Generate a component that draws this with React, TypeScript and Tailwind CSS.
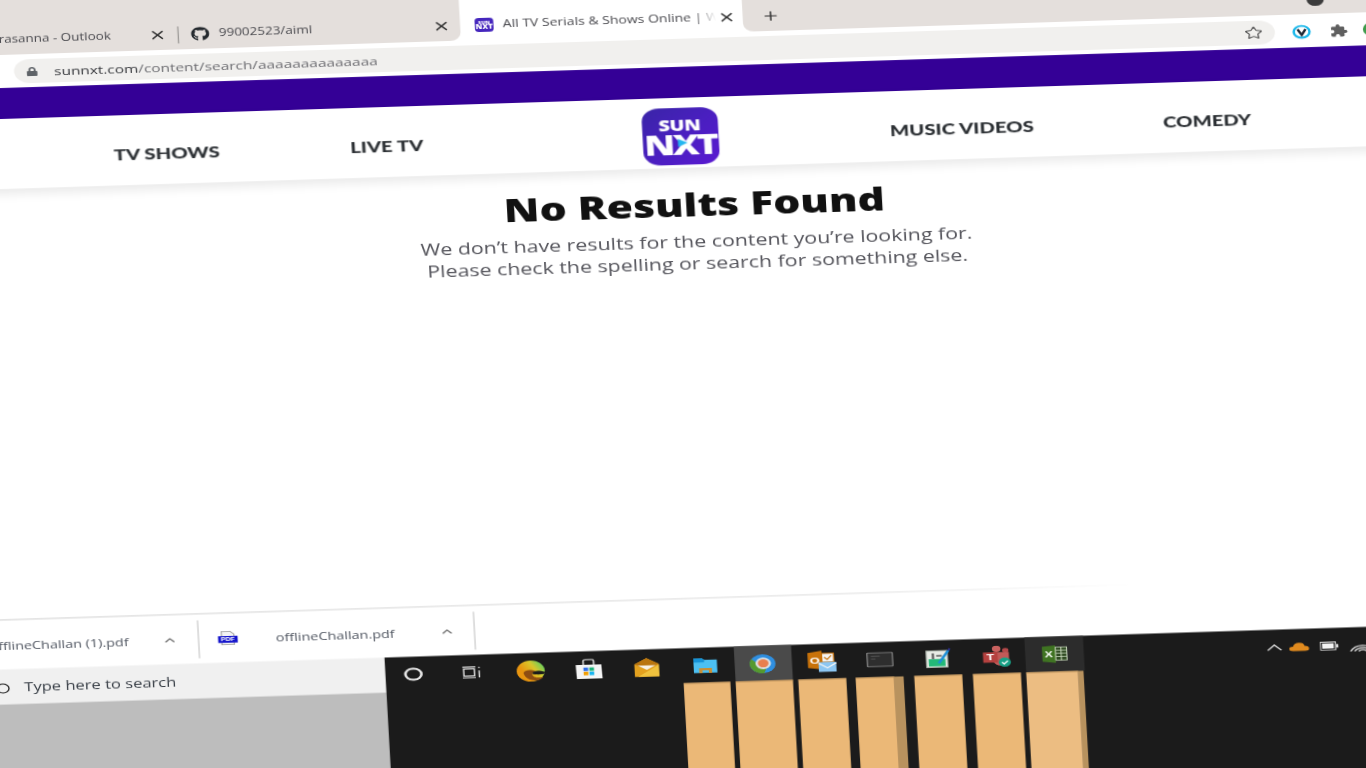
import { ChevronUp, Plus, Star, X } from "lucide-react";
import { FaGithub, FaLock } from "react-icons/fa";

function SunNxtLogo() {
	return (
		<div className="relative flex h-[57px] w-[57px] flex-col items-center justify-center rounded-[13px] bg-gradient-to-br from-[#3a24a8] via-[#4a1fc0] to-[#5a18d2] pt-[3px] font-['Open_Sans',sans-serif] text-white">
			<span className="text-[15px] leading-[13px] font-extrabold tracking-tight">SUN</span>
			<span className="text-[28px] leading-[24px] font-extrabold tracking-[-2px]">NXT</span>
			<svg viewBox="0 0 10 10" className="absolute top-[31px] left-[25px] h-[8px] w-[9px]">
				<path d="M1 0 L10 5 L1 10 Z" fill="#23b5f0" />
			</svg>
		</div>
	);
}

function Favicon() {
	return (
		<div className="flex h-[14px] w-[14px] shrink-0 flex-col items-center justify-center rounded-[3px] bg-[#4526bd] text-white">
			<span className="text-[4px] leading-[4px] font-extrabold">SUN</span>
			<span className="text-[6px] leading-[5px] font-extrabold">NXT</span>
		</div>
	);
}

function PdfIcon() {
	return (
		<svg viewBox="0 0 16 16" className="h-[15px] w-[15px] shrink-0">
			<path d="M3 1 H10 L13 4 V15 H3 Z" fill="#f4f4f4" stroke="#9a9a9a" strokeWidth="0.8" />
			<rect x="0" y="6" width="16" height="7" fill="#1414cc" />
			<text x="8" y="11.6" textAnchor="middle" fontSize="5.6" fontWeight="700" fill="#fff" fontFamily="Liberation Sans, sans-serif">PDF</text>
		</svg>
	);
}

function VimeoIcon() {
	return (
		<svg viewBox="0 0 16 16" className="h-[15px] w-[14px] shrink-0">
			<circle cx="8" cy="8" r="6.8" fill="#fff" stroke="#1ab7ea" strokeWidth="2.2" />
			<path d="M4.6 5 L8 11.6 L11.4 5" fill="none" stroke="#1d2733" strokeWidth="2.2" />
		</svg>
	);
}

function PuzzleIcon() {
	return (
		<svg viewBox="0 0 24 24" className="ml-[14px] h-[17px] w-[14px] shrink-0" fill="#5f5f5f">
			<path d="M20.5 11H19V7c0-1.1-.9-2-2-2h-4V3.5C13 2.12 11.88 1 10.5 1S8 2.12 8 3.5V5H4c-1.1 0-1.99.9-1.99 2v3.8H3.5c1.49 0 2.7 1.21 2.7 2.7s-1.21 2.7-2.7 2.7H2V20c0 1.1.9 2 2 2h3.8v-1.5c0-1.49 1.21-2.7 2.7-2.7 1.49 0 2.7 1.21 2.7 2.7V22H17c1.1 0 2-.9 2-2v-4h1.5c1.38 0 2.5-1.12 2.5-2.5S21.88 11 20.5 11z" />
		</svg>
	);
}

function EdgeIcon() {
	return (
		<svg viewBox="0 0 24 24" className="h-[22px] w-[22px]">
			<defs>
				<linearGradient id="edgeGrad" x1="0" y1="0.8" x2="1" y2="0.2">
					<stop offset="0.3" stopColor="#e8950f" />
					<stop offset="0.65" stopColor="#d9c62a" />
					<stop offset="1" stopColor="#55d065" />
				</linearGradient>
			</defs>
			<circle cx="12" cy="12" r="11.5" fill="url(#edgeGrad)" />
			<path d="M6 14 C7 20 12 23.5 18 22 C20 21 21 20.5 22 19 C17 20.5 13 18.5 13 15.5 C13 14 14 13 16 12.5 C12 10 7 10.5 6 14 Z" fill="#8e4d12" />
			<path d="M13 15 C13.5 12 18 11 23.5 13.5 L23 15.5 C20 16 16 16.5 13 15 Z" fill="#1b1b1b" />
		</svg>
	);
}

function StoreIcon() {
	return (
		<svg viewBox="0 0 24 24" className="h-[22px] w-[21px]">
			<path d="M7.5 7 V3 Q7.5 1 9.5 1 H14.5 Q16.5 1 16.5 3 V7" fill="none" stroke="#bdbdbd" strokeWidth="1.6" />
			<path d="M1 7 H23 L23.5 23 H1.5 Z" fill="#f5f5f5" />
			<rect x="7.5" y="10" width="4" height="4" fill="#2f6fe8" />
			<rect x="12.5" y="10" width="4" height="4" fill="#18b37a" />
			<rect x="7.5" y="15" width="4" height="4" fill="#f29f05" />
			<rect x="12.5" y="15" width="4" height="4" fill="#19b5f0" />
		</svg>
	);
}

function MailIcon() {
	return (
		<svg viewBox="0 0 24 24" className="h-[20px] w-[22px]">
			<path d="M1 8 L12 1 L23 8 V23 H1 Z" fill="#e3a11f" />
			<path d="M1 8 L12 1 L23 8 L12 14 Z" fill="#b9750f" />
			<path d="M4 9.5 H20 L12 15 Z" fill="#f7f2e6" />
			<path d="M23 9 V23 H4 Z" fill="#f0c23e" />
		</svg>
	);
}

function FolderIcon() {
	return (
		<svg viewBox="0 0 24 20" className="h-[16px] w-[20px]">
			<path d="M1 1 H9 L11 3 H23 V19 H1 Z" fill="#4cc0f2" />
			<path d="M1 1 H9 L11 3 V6 H1 Z" fill="#1593d8" />
			<path d="M6 19.5 V13 H18 V19.5 H15 V16 H9 V19.5 Z" fill="#c98f35" />
		</svg>
	);
}

function ChromeIcon() {
	return (
		<svg viewBox="0 0 24 24" className="h-[20px] w-[20px]">
			<circle cx="12" cy="12" r="11.5" fill="#2f8fe0" />
			<path d="M2 6 A11.5 11.5 0 0 0 13 23.4 L15 18 L7 11 Z" fill="#55992f" />
			<circle cx="12.5" cy="11.5" r="7" fill="#dcdfe2" />
			<circle cx="12.5" cy="11.5" r="4.8" fill="#ea7f4e" />
		</svg>
	);
}

function OutlookIcon() {
	return (
		<svg viewBox="0 0 26 26" className="h-[23px] w-[23px]">
			<path d="M1 3 L13 1 V22 L1 20 Z" fill="#c8720a" />
			<rect x="13" y="4" width="10" height="10" fill="#f5f5f5" stroke="#c8720a" strokeWidth="1" />
			<path d="M15 8.5 L17.5 11 L21 6.5" fill="none" stroke="#c8720a" strokeWidth="1.2" />
			<text x="7" y="15" textAnchor="middle" fontSize="11" fontWeight="700" fill="#fff" fontFamily="Liberation Sans, sans-serif">O</text>
			<rect x="10" y="14" width="15" height="11" fill="#8cc6f2" />
			<path d="M10 15 L17.5 20.5 L25 15" fill="none" stroke="#f5f5f5" strokeWidth="1.3" />
		</svg>
	);
}

function ConsoleIcon() {
	return (
		<svg viewBox="0 0 24 18" className="h-[15px] w-[20px]">
			<rect x="0.5" y="0.5" width="23" height="17" rx="1" fill="#2e2e2e" stroke="#8c8c8c" strokeWidth="1.2" />
			<path d="M4 5 H12 M4 8 H8" stroke="#5c5c5c" strokeWidth="1" />
		</svg>
	);
}

function EditorIcon() {
	return (
		<svg viewBox="0 0 24 24" className="h-[22px] w-[20px]">
			<path d="M1 3 H20 V23 H1 Z" fill="#e9ece6" stroke="#aeb6ac" strokeWidth="1" />
			<rect x="3" y="13" width="15" height="8.5" fill="#23b878" />
			<path d="M7 6 V13 M10 9 H15" stroke="#5a5a5a" strokeWidth="2" />
			<path d="M12 18 L21 3" stroke="#1c8ed6" strokeWidth="2.6" />
			<path d="M21 3 L22.4 0.6" stroke="#2b2f8a" strokeWidth="2" />
		</svg>
	);
}

function TeamsIcon() {
	return (
		<svg viewBox="0 0 26 26" className="h-[22px] w-[23px]">
			<circle cx="13" cy="4" r="3.8" fill="#c9625f" />
			<circle cx="21" cy="6" r="2.8" fill="#b5494a" />
			<path d="M10 8 H24 V18 Q24 24 17 24 Q11 24 10 18 Z" fill="#c15a58" />
			<rect x="1" y="8" width="13" height="12" fill="#b5413f" />
			<text x="7.5" y="17.5" textAnchor="middle" fontSize="11" fontWeight="700" fill="#fff" fontFamily="Liberation Sans, sans-serif">T</text>
			<circle cx="20" cy="20" r="5.4" fill="#17a085" />
			<path d="M17.5 20 L19.4 22 L22.8 18.4" fill="none" stroke="#fff" strokeWidth="1.3" />
		</svg>
	);
}

function ExcelIcon() {
	return (
		<svg viewBox="0 0 26 24" className="h-[19px] w-[20px]">
			<path d="M1 2 L14 0.5 V23.5 L1 21.5 Z" fill="#3f7322" />
			<rect x="14" y="3" width="11" height="17" fill="#2f4a22" stroke="#c9d9bd" strokeWidth="1" />
			<path d="M19.5 3 V20 M14 7 H25 M14 11 H25 M14 15 H25" stroke="#c9d9bd" strokeWidth="1" />
			<text x="7.5" y="16.5" textAnchor="middle" fontSize="12" fontWeight="700" fill="#fff" fontFamily="Liberation Sans, sans-serif">X</text>
		</svg>
	);
}

const TASKBAR_ITEMS = [
	{
		id: "cortana",
		bg: "",
		icon: <span className="block h-[13px] w-[14px] rounded-full border-2 border-[#e6e6e6]" />,
	},
	{
		id: "taskview",
		bg: "",
		icon: (
			<svg viewBox="0 0 18 14" className="h-[13px] w-[16px]" fill="none" stroke="#e6e6e6" strokeWidth="1.2">
				<rect x="2" y="3" width="9" height="8" />
				<path d="M1 1 H12 M1 13 H12 M15 1 V2.5 M15 5 V13" />
			</svg>
		),
	},
	{ id: "edge", bg: "", icon: <EdgeIcon /> },
	{ id: "store", bg: "", icon: <StoreIcon /> },
	{ id: "mail", bg: "", icon: <MailIcon /> },
	{ id: "explorer", bg: "", icon: <FolderIcon /> },
	{ id: "chrome", bg: "bg-[#4a4a4a]", icon: <ChromeIcon /> },
	{ id: "outlook", bg: "", icon: <OutlookIcon /> },
	{ id: "console", bg: "", icon: <ConsoleIcon /> },
	{ id: "editor", bg: "", icon: <EditorIcon /> },
	{ id: "teams", bg: "", icon: <TeamsIcon /> },
	{ id: "excel", bg: "bg-[#2c2c2c]", icon: <ExcelIcon /> },
];

export default function App() {
	return (
		<div className="h-screen w-screen overflow-hidden bg-white">
			<div className="-mt-[40px] ml-[131px] flex h-[850px] w-[1104px] origin-[552px_424px] flex-col bg-white font-['Open_Sans',sans-serif] blur-[0.35px] [transform:scaleX(1.334)_rotate(-2.39deg)]">
				{/* tab strip */}
				<div className="flex h-[74px] shrink-0 text-[#4a4a4f]">
					<div className="flex w-[400px] items-end rounded-br-[8px] bg-[#e4dfdc] text-[10.1px]">
						<div className="flex h-[30px] w-full items-center">
							<div className="flex w-[188px] items-center justify-end pr-[8px]">
								<span className="whitespace-nowrap">Prasanna - Outlook</span>
								<X className="ml-[28px] h-[14px] w-[14px] text-[#333]" strokeWidth={2.2} />
							</div>
							<div className="h-[17px] w-px bg-[#9f9c9a]" />
							<FaGithub className="ml-[9px] h-[14px] w-[14px] text-[#24292e]" />
							<span className="ml-[7px] whitespace-nowrap">99002523/aiml</span>
							<X className="mr-[7px] ml-auto h-[14px] w-[14px] text-[#333]" strokeWidth={2.2} />
						</div>
					</div>
					<div className="flex w-[212px] items-end text-[10.5px]">
						<div className="flex h-[30px] items-center pl-[11px]">
							<Favicon />
							<span className="ml-[7px] w-[160px] overflow-hidden whitespace-nowrap [mask-image:linear-gradient(to_right,black_90%,transparent)]">
								All TV Serials &amp; Shows Online | Watch
							</span>
							<X className="ml-[1px] h-[14px] w-[14px] text-[#333]" strokeWidth={2.2} />
						</div>
					</div>
					<div className="flex flex-1 items-end rounded-bl-[8px] bg-[#e4dfdc]">
						<div className="flex h-[30px] w-full items-center pl-[14px]">
							<Plus className="h-[14px] w-[14px] text-[#333]" strokeWidth={2} />
							<span className="mr-[56px] ml-auto block h-[13px] w-[13px] rounded-full bg-[#3c3c3c]" />
						</div>
					</div>
				</div>

				{/* toolbar */}
				<div className="flex h-[33px] shrink-0 items-start pt-[5px]">
					<div className="ml-[64px] flex h-[24px] w-[946px] items-center rounded-full bg-[#f1f0ee] pl-[9px]">
						<FaLock className="h-[9px] w-[9px] text-[#5f6368]" />
						<span className="mt-[1px] ml-[12px] text-[11.55px] whitespace-nowrap text-[#6b6b70]">
							<span className="text-[#35373b]">sunnxt.com</span>/content/search/aaaaaaaaaaaaaa
						</span>
						<Star className="mr-[9px] ml-auto h-[14px] w-[14px] text-[#5a5a5a]" strokeWidth={1.8} />
					</div>
					<div className="ml-[13px] flex h-[24px] items-center">
						<VimeoIcon />
						<PuzzleIcon />
						<span className="ml-[11px] block h-[14px] w-[14px] shrink-0 rounded-full bg-[#3d9a4a]" />
					</div>
				</div>

				{/* purple band */}
				<div className="h-[31px] shrink-0 bg-[#340096]" />

				{/* site nav */}
				<nav className="relative z-10 flex h-[70px] shrink-0 items-center bg-white pt-[9px] pl-[95px] font-['Lato',sans-serif] text-[15.2px] font-black text-[#2b2f33] shadow-[0_5px_9px_rgba(0,0,0,0.09)]">
					<a className="w-[160px] text-center whitespace-nowrap">TV SHOWS</a>
					<a className="w-[170px] text-center whitespace-nowrap">LIVE TV</a>
					<div className="flex w-[270px] justify-center">
						<div className="-mt-[3px]">
							<SunNxtLogo />
						</div>
					</div>
					<a className="w-[153px] text-center whitespace-nowrap">MUSIC VIDEOS</a>
					<a className="w-[215px] text-center whitespace-nowrap">COMEDY</a>
				</nav>

				{/* empty search results */}
				<main className="flex h-[430px] shrink-0 flex-col items-center pt-[15px] pl-[32px]">
					<h1 className="text-[32px] leading-[44px] font-extrabold text-[#111]">No Results Found</h1>
					<p className="mt-[4px] text-center text-[16px] leading-[22px] text-[#55555c]">
						We don’t have results for the content you’re looking for.
						<br />
						Please check the spelling or search for something else.
					</p>
				</main>

				{/* downloads bar */}
				<div className="h-px shrink-0 bg-gradient-to-r from-[#cfcfcf] via-[#dedede] via-60% to-white to-80%" />
				<div className="flex h-[49px] shrink-0 items-center text-[10.8px] text-[#4f5560]">
					<div className="flex w-[178px] items-center justify-end pr-[15px]">
						<span className="mt-[3px] whitespace-nowrap">offlineChallan (1).pdf</span>
						<ChevronUp className="ml-[25px] h-[14px] w-[12px] text-[#777]" strokeWidth={2.4} />
					</div>
					<div className="h-[38px] w-px bg-[#cfcfcf]" />
					<div className="flex w-[206px] items-center pr-[14px] pl-[14px]">
						<PdfIcon />
						<span className="mt-[4px] ml-[28.5px] whitespace-nowrap">offlineChallan.pdf</span>
						<ChevronUp className="ml-auto h-[14px] w-[12px] text-[#777]" strokeWidth={2.4} />
					</div>
					<div className="h-[38px] w-px bg-[#cfcfcf]" />
				</div>

				{/* windows taskbar */}
				<div className="flex min-h-0 flex-1">
					<div className="flex w-[316.5px] flex-col">
						<div className="flex h-[35px] items-center bg-[#f0f0f0] pt-[3px] pl-[25px] text-[12.4px] text-[#3a4048]">
							<span className="block h-[10px] w-[10px] rounded-full border border-[#222]" />
							<span className="ml-[11px] whitespace-nowrap">Type here to search</span>
						</div>
						<div className="flex-1 bg-[#bdbdbd]" />
					</div>
					<div className="flex flex-1 flex-col bg-[#1b1b1b]">
						<div className="flex h-[35px] items-center">
							{TASKBAR_ITEMS.map((item) => (
								<div key={item.id} className={`flex h-[35px] w-[43.7px] items-center justify-center ${item.bg}`}>
									{item.icon}
								</div>
							))}
							<svg viewBox="0 0 14 8" className="ml-[137px] h-[8px] w-[12px]" fill="none" stroke="#e6e6e6" strokeWidth="1.3">
								<path d="M1 7 L7 1 L13 7" />
							</svg>
							<svg viewBox="0 0 20 12" className="ml-[5px] h-[11px] w-[15px]">
								<path d="M4 12 Q0 12 0 9 Q0 6 4 6 Q5 1 10 1 Q15 1 15.5 5.5 Q20 6 20 9 Q20 12 16 12 Z" fill="#e08a1e" />
							</svg>
							<svg viewBox="0 0 16 10" className="ml-[8px] h-[10px] w-[14px]" fill="none">
								<rect x="0.5" y="0.5" width="13" height="9" stroke="#dcdcdc" />
								<rect x="2" y="2" width="10" height="6" fill="#f4f4f4" />
								<rect x="14" y="3" width="2" height="4" fill="#dcdcdc" />
							</svg>
							<svg viewBox="0 0 20 14" className="ml-[8px] h-[14px] w-[20px] shrink-0" fill="none" stroke="#dadada" strokeWidth="1.3">
								<path d="M1 13 A10 10 0 0 1 19 13 M4 13 A7 7 0 0 1 16 13 M7 13 A4 4 0 0 1 13 13" />
							</svg>
						</div>
						<div className="flex flex-1 pl-[223px]">
							<div className="w-[35.5px] border-t border-[#c79a60] bg-[#ebb877]" />
							<div className="ml-[4.4px] w-[42.6px] border-t border-[#c79a60] bg-[#ebb877]" />
							<div className="ml-[4px] w-[35.8px] border-t border-[#c79a60] bg-[#ebb877]" />
							<div className="ml-[7.5px] w-[28.4px] border-t border-[#c79a60] bg-[#ebb877]" />
							<div className="w-[7.5px] bg-[#b8925e]" />
							<div className="ml-[8.3px] w-[36px] border-t border-[#c79a60] bg-[#ebb877]" />
							<div className="ml-[7.6px] w-[36px] border-t border-[#c79a60] bg-[#ebb877]" />
							<div className="ml-[3.6px] w-[39.7px] border-t border-[#c79a60] bg-[#ecbd82]" />
							<div className="w-[3.7px] bg-[#b8925e]" />
						</div>
					</div>
				</div>
			</div>
		</div>
	);
}
